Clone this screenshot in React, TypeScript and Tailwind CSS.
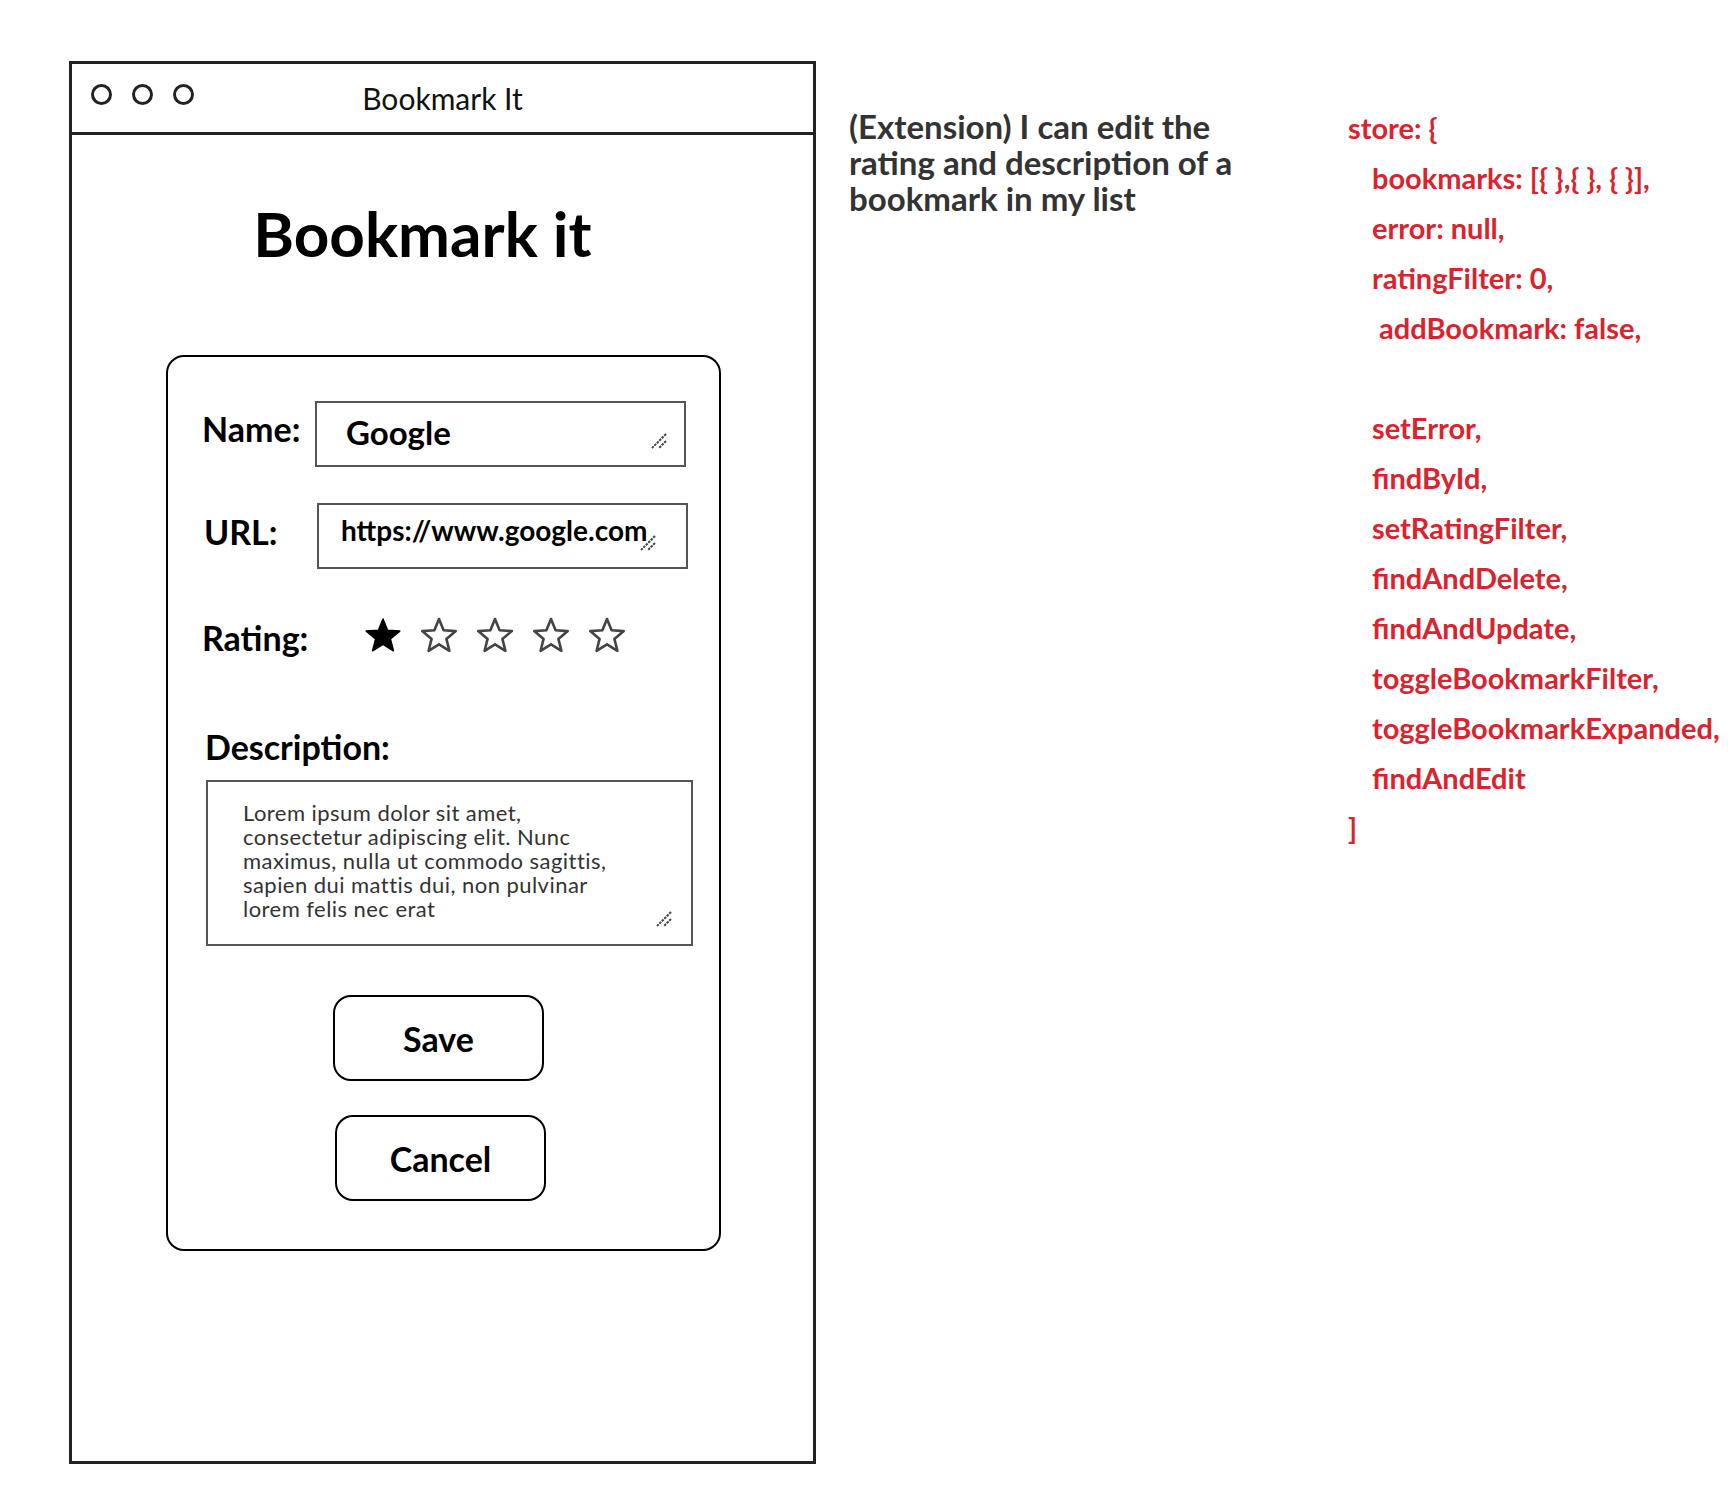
import React from 'react';

const font = { fontFamily: 'Lato, "Noto Sans", sans-serif' };

function Grip() {
  return (
    <svg width="18" height="18" viewBox="0 0 18 18" className="shrink-0">
      <line x1="16" y1="2" x2="2" y2="16" stroke="#444" strokeWidth="2" strokeDasharray="2.5 1" />
      <line x1="16" y1="9" x2="9" y2="16" stroke="#444" strokeWidth="2" strokeDasharray="2.5 1" />
    </svg>
  );
}

function Star({ filled }: { filled: boolean }) {
  return (
    <svg width="38" height="37" viewBox="0 0 38 37">
      <path
        d="M19 2 L23.6 13.3 L35.8 14.1 L26.4 21.9 L29.4 33.8 L19 27.3 L8.6 33.8 L11.6 21.9 L2.2 14.1 L14.4 13.3 Z"
        fill={filled ? '#000' : 'none'}
        stroke={filled ? '#000' : '#444'}
        strokeWidth={filled ? 1.5 : 2.6}
        strokeLinejoin="round"
      />
    </svg>
  );
}

const codeLines = [
  { text: 'store: {', indent: 'pl-0' },
  { text: 'bookmarks: [{ },{ }, { }],', indent: 'pl-[24px]' },
  { text: 'error: null,', indent: 'pl-[24px]' },
  { text: 'ratingFilter: 0,', indent: 'pl-[24px]' },
  { text: 'addBookmark: false,', indent: 'pl-[31px]' },
  { text: '', indent: 'pl-[24px]' },
  { text: 'setError,', indent: 'pl-[24px]' },
  { text: 'findById,', indent: 'pl-[24px]' },
  { text: 'setRatingFilter,', indent: 'pl-[24px]' },
  { text: 'findAndDelete,', indent: 'pl-[24px]' },
  { text: 'findAndUpdate,', indent: 'pl-[24px]' },
  { text: 'toggleBookmarkFilter,', indent: 'pl-[24px]' },
  { text: 'toggleBookmarkExpanded,', indent: 'pl-[24px]' },
  { text: 'findAndEdit', indent: 'pl-[24px]' },
  { text: ']', indent: 'pl-0' },
];

export default function App() {
  return (
    <div className="w-[1728px] h-[1494px] bg-white flex items-start overflow-hidden" style={font}>
      {/* browser window */}
      <div className="ml-[69px] mt-[61px] w-[747px] h-[1403px] border-[3px] border-[#222] flex flex-col shrink-0">
        <div className="h-[71px] border-b-[3px] border-[#222] grid grid-cols-[1fr_auto_1fr] items-center">
          <div className="flex gap-[20px] pl-[19px] mb-[8px]">
            <div className="w-[21px] h-[21px] rounded-full border-[3px] border-[#222]" />
            <div className="w-[21px] h-[21px] rounded-full border-[3px] border-[#222]" />
            <div className="w-[21px] h-[21px] rounded-full border-[3px] border-[#222]" />
          </div>
          <div className="text-[30px] text-[#111] leading-none">Bookmark It</div>
          <div />
        </div>

        <h1 className="mt-[67px] pr-[40px] text-center text-[62px] font-bold leading-none text-black">Bookmark it</h1>

        {/* edit card */}
        <div className="mt-[91px] ml-[94px] w-[555px] border-2 border-black rounded-[18px] pt-[44px] pb-[48px] flex flex-col text-black">
          <div className="flex items-center">
            <span className="ml-[34px] w-[113px] text-[34px] font-bold leading-none mb-[11px]">Name:</span>
            <div className="w-[371px] h-[66px] border-2 border-[#555] flex items-center justify-between pl-[29px] pr-[16px]">
              <span className="text-[33px] font-bold leading-none mb-[4px]">Google</span>
              <div className="self-end mb-[15px]"><Grip /></div>
            </div>
          </div>

          <div className="flex items-center mt-[36px]">
            <span className="ml-[36px] w-[113px] text-[34px] font-bold leading-none mb-[8px]">URL:</span>
            <div className="w-[371px] h-[66px] border-2 border-[#555] flex items-center pl-[22px] pr-[16px]">
              <span className="text-[28px] font-bold leading-none mb-[12px] whitespace-nowrap">https://www.google.com</span>
              <div className="self-end mb-[15px] -ml-[8px]"><Grip /></div>
            </div>
          </div>

          <div className="flex items-center mt-[49px] h-[40px]">
            <span className="ml-[34px] w-[162px] text-[34px] font-bold leading-none">Rating:</span>
            <div className="flex gap-[18px] -mt-[6px]">
              <Star filled />
              <Star filled={false} />
              <Star filled={false} />
              <Star filled={false} />
              <Star filled={false} />
            </div>
          </div>

          <span className="ml-[37px] mt-[69px] text-[34px] font-bold leading-[40px]">Description:</span>

          <div className="ml-[38px] mt-[13px] w-[487px] h-[166px] border-2 border-[#555] flex justify-between pl-[35px] pr-[18px] pt-[19px] pb-[16px]">
            <p className="text-[22px] leading-[24px] tracking-[0.45px] text-[#333]">
              Lorem ipsum dolor sit amet,
              <br />
              consectetur adipiscing elit. Nunc
              <br />
              maximus, nulla ut commodo sagittis,
              <br />
              sapien dui mattis dui, non pulvinar
              <br />
              lorem felis nec erat
            </p>
            <div className="self-end"><Grip /></div>
          </div>

          <button className="ml-[165px] mt-[49px] w-[211px] h-[86px] border-2 border-black rounded-[18px] text-[34px] font-bold bg-white">
            Save
          </button>
          <button className="ml-[167px] mt-[34px] w-[211px] h-[86px] border-2 border-black rounded-[18px] text-[34px] font-bold bg-white">
            Cancel
          </button>
        </div>
      </div>

      {/* user story */}
      <div className="ml-[33px] mt-[108px] w-[499px] shrink-0 text-[33px] font-bold leading-[36px] text-[#333]">
        <div>(Extension) I can edit the</div>
        <div>rating and description of a</div>
        <div>bookmark in my list</div>
      </div>

      {/* store shape */}
      <div className="mt-[103px] shrink-0 text-[29px] font-bold leading-[50px] text-[#d9232e] whitespace-nowrap">
        {codeLines.map((line, i) => (
          <div key={i} className={`h-[50px] ${line.indent}`}>
            {line.text}
          </div>
        ))}
      </div>
    </div>
  );
}
